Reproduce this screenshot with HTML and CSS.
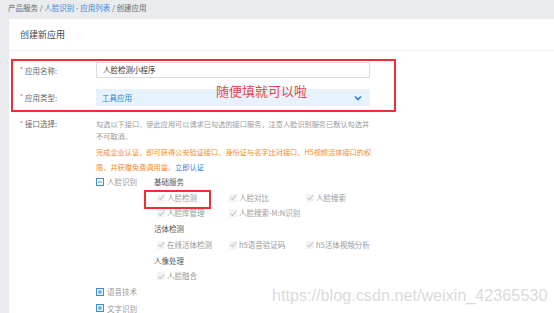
FILE: index.html
```html
<!DOCTYPE html>
<html>
<head>
    <title>创建应用</title>
    <link rel="stylesheet" href="styles.css">
</head>
<body>
    <div class="crumbs">产品服务 / <a href="#list">人脸识别 - 应用列表</a> / 创建应用</div>
    <div class="card">
        <div class="card-title">创建新应用</div>
        <div class="card-body">
            <div class="mark-box">
                <div class="row row-name">
                    <label class="label"><span class="req">*</span>应用名称:</label>
                    <div class="input">人脸检测小程序</div>
                </div>
                <div class="row row-type">
                    <label class="label"><span class="req">*</span>应用类型:</label>
                    <div class="select">
                        <span>工具应用</span>
                        <svg class="chevron" width="8" height="6" viewBox="0 0 8 6"><path d="M1 1.5 L4 4.5 L7 1.5" fill="none" stroke="#2b7fd8" stroke-width="1.6"/></svg>
                    </div>
                </div>
                <div class="note">随便填就可以啦</div>
            </div>

            <div class="row row-api">
                <label class="label"><span class="req">*</span>接口选择:</label>
                <div class="api">
                    <p class="desc">勾选以下接口，使此应用可以请求已勾选的接口服务，注意人脸识别服务已默认勾选并<br>不可取消。</p>
                    <p class="warn">完成企业认证，即可获得公安验证接口、身份证与名字比对接口、H5视频活体接口的权<br>限，并获赠免费调用量。<a href="#auth">立即认证</a></p>

                    <div class="tree">
                        <div class="node open">
                            <div class="node-head">
                                <svg class="toggle" width="8" height="8" viewBox="0 0 8 8"><rect x="0.5" y="0.5" width="7" height="7" fill="#fff" stroke="#3b8ee0"/><path d="M2 4 H6" stroke="#3b8ee0"/></svg>
                                <span>人脸识别</span>
                            </div>
                            <div class="groups">
                                <div class="group-title">基础服务</div>
                                <div class="checks">
                                    <div class="check marked"><i class="box"></i>人脸检测</div>
                                    <div class="check"><i class="box"></i>人脸对比</div>
                                    <div class="check"><i class="box"></i>人脸搜索</div>
                                    <div class="check"><i class="box"></i>人脸库管理</div>
                                    <div class="check"><i class="box"></i>人脸搜索-M:N识别</div>
                                </div>
                                <div class="group-title">活体检测</div>
                                <div class="checks">
                                    <div class="check"><i class="box"></i>在线活体检测</div>
                                    <div class="check"><i class="box"></i>h5语音验证码</div>
                                    <div class="check"><i class="box"></i>h5活体视频分析</div>
                                </div>
                                <div class="group-title">人像处理</div>
                                <div class="checks">
                                    <div class="check"><i class="box"></i>人脸融合</div>
                                </div>
                            </div>
                        </div>
                        <div class="node">
                            <div class="node-head">
                                <svg class="toggle" width="8" height="8" viewBox="0 0 8 8"><rect x="0.5" y="0.5" width="7" height="7" fill="#e3f0fc" stroke="#3b8ee0"/><path d="M2 4 H6 M4 2 V6" stroke="#3b8ee0"/></svg>
                                <span>语音技术</span>
                            </div>
                        </div>
                        <div class="node">
                            <div class="node-head">
                                <svg class="toggle" width="8" height="8" viewBox="0 0 8 8"><rect x="0.5" y="0.5" width="7" height="7" fill="#e3f0fc" stroke="#3b8ee0"/><path d="M2 4 H6 M4 2 V6" stroke="#3b8ee0"/></svg>
                                <span>文字识别</span>
                            </div>
                        </div>
                    </div>
                </div>
            </div>
        </div>
        <div class="watermark">https://blog.csdn.net/weixin_42365530</div>
    </div>
</body>
</html>
```

FILE: styles.css
```css
body {
    margin: 0;
    background: #e9ebef;
    font-family: "Noto Sans CJK SC", "Noto Sans", sans-serif;
    font-size: 7.5px;
    color: #666;
    height: 313px;
    overflow: hidden;
}
a {
    color: #2f7de1;
    text-decoration: none;
}
p {
    margin: 0;
}
.crumbs {
    height: 19px;
    line-height: 15px;
    padding-left: 8px;
    color: #666;
}
.crumbs a {
    color: #3a85d8;
}
.card {
    position: relative;
    margin-left: 9px;
    height: 294px;
    background: #fff;
}
.card-title {
    height: 31px;
    line-height: 31px;
    padding-left: 11px;
    font-size: 9px;
    color: #444;
    border-bottom: 1px solid #eef0f3;
}
.card-body {
    padding-top: 8px;
}
.mark-box {
    position: relative;
    box-sizing: border-box;
    width: 385px;
    margin-left: 2px;
    padding: 1px 0 4px 7px;
    border: 2px solid #ec2f35;
}
.row {
    display: flex;
    align-items: center;
}
.row-type {
    margin-top: 11px;
}
.label {
    width: 76px;
    flex-shrink: 0;
    color: #666;
}
.req {
    display: inline-block;
    width: 5px;
    color: #e5484d;
    font-size: 6px;
    vertical-align: top;
}
.input {
    box-sizing: border-box;
    width: 274px;
    height: 16px;
    line-height: 14px;
    padding-left: 6px;
    border: 1px solid #dcdcdc;
    color: #333;
}
.select {
    box-sizing: border-box;
    display: flex;
    align-items: center;
    justify-content: space-between;
    width: 274px;
    height: 17px;
    padding: 0 8px 0 6px;
    background: #e6f3fd;
    color: #2b7fd8;
}
.note {
    position: absolute;
    left: 203px;
    top: 22px;
    font-family: "Noto Sans CJK SC", serif;
    font-size: 13px;
    line-height: 16px;
    color: #e8454a;
}
.row-api {
    align-items: flex-start;
    margin-top: 6px;
    padding-left: 11px;
}
.row-api .label {
    line-height: 12px;
}
.api {
    width: 300px;
}
.desc {
    white-space: nowrap;
    font-size: 7.2px;
    line-height: 12px;
    color: #999;
}
.warn {
    white-space: nowrap;
    font-size: 7.2px;
    margin-top: 3px;
    line-height: 14.5px;
    color: #f58a1f;
}
.tree {
    line-height: 15.7px;
}
.node {
    display: flex;
}
.node + .node {
    margin-top: 0.5px;
}
.node-head {
    display: flex;
    align-items: center;
    gap: 3px;
    width: 58px;
    height: 15.7px;
    color: #999;
}
.groups {
    flex: 1;
}
.group-title {
    color: #555;
}
.checks {
    display: grid;
    grid-template-columns: 72px 77px auto;
    padding-left: 3px;
}
.check {
    position: relative;
    display: flex;
    align-items: center;
    gap: 2px;
    color: #999;
}
.box {
    position: relative;
    width: 8px;
    height: 8px;
    background: #f3f3f3;
}
.box::after {
    content: "";
    position: absolute;
    left: 2.5px;
    top: 0.5px;
    width: 2px;
    height: 4.5px;
    border: solid #c4c4c4;
    border-width: 0 1.2px 1.2px 0;
    transform: rotate(40deg);
}
.marked::before {
    content: "";
    position: absolute;
    left: -13px;
    top: 0;
    width: 67px;
    height: 19px;
    box-sizing: border-box;
    border: 2px solid #ec2f35;
}
.watermark {
    position: absolute;
    left: 263px;
    top: 267px;
    font-family: "Liberation Sans", Arial, sans-serif;
    font-size: 16.2px;
    line-height: 18px;
    color: #dadada;
}
```
